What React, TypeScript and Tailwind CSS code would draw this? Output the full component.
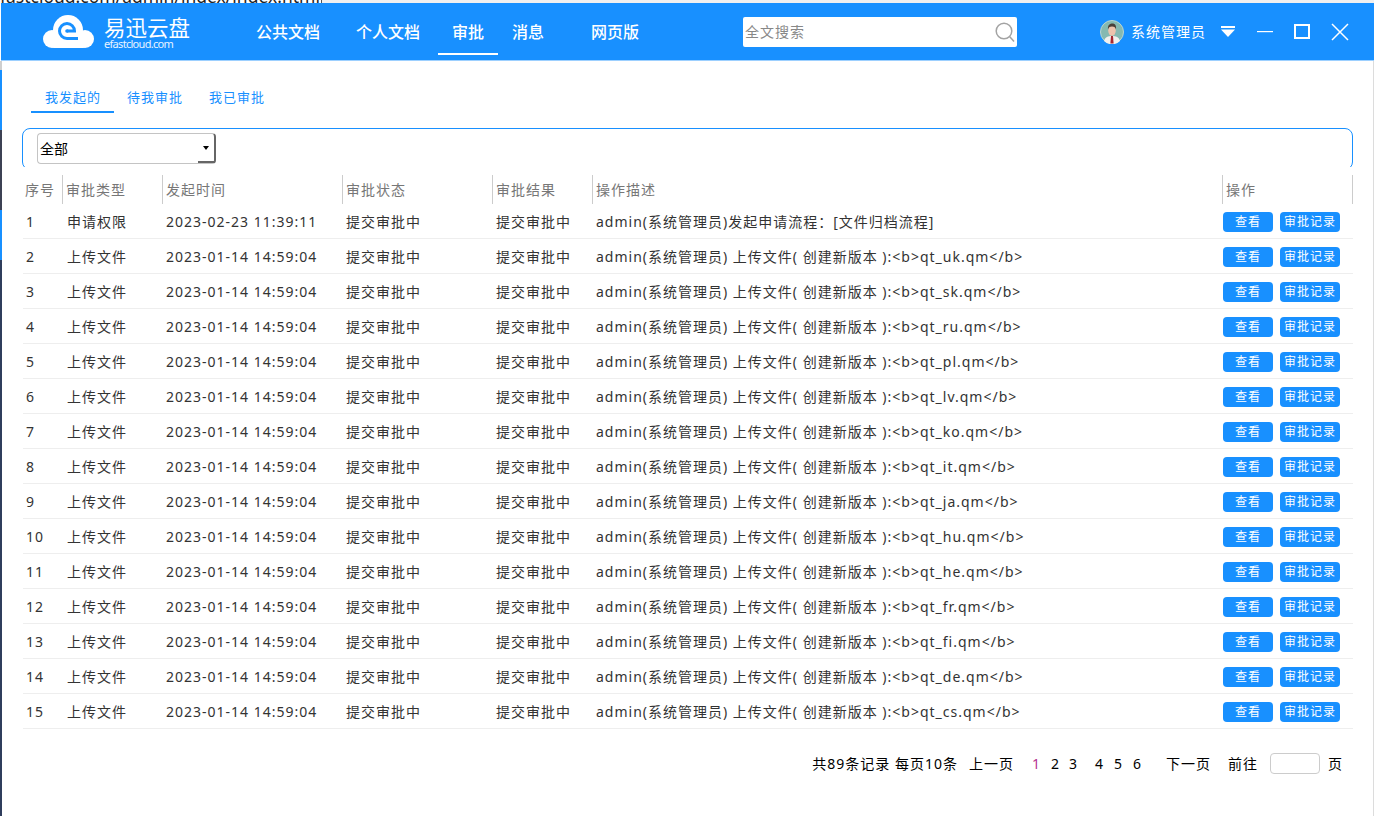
const rows: [string, string, string, string][] = [
  ['1', '申请权限', '2023-02-23 11:39:11', 'admin(系统管理员)发起申请流程：[文件归档流程]'],
  ...['uk', 'sk', 'ru', 'pl', 'lv', 'ko', 'it', 'ja', 'hu', 'he', 'fr', 'fi', 'de', 'cs'].map(
    (code, i): [string, string, string, string] => [
      String(i + 2),
      '上传文件',
      '2023-01-14 14:59:04',
      `admin(系统管理员) 上传文件( 创建新版本 ):<b>qt_${code}.qm</b>`,
    ],
  ),
];

const heads = ['序号', '审批类型', '发起时间', '审批状态', '审批结果', '操作描述', '操作'];
const cols = 'grid grid-cols-[39px_100px_180px_150px_100px_630px_130px]';

function Logo() {
  return (
    <svg width="52" height="34" viewBox="0 0 52 34" className="shrink-0">
      <circle cx="25" cy="15" r="15" fill="#fff" />
      <circle cx="9" cy="24" r="9" fill="#fff" />
      <circle cx="42" cy="24" r="9" fill="#fff" />
      <rect x="9" y="18" width="33" height="15" rx="2" fill="#fff" />
      <path d="M24 16H31.500A7.500 7.500 0 1 0 24 23.500H35" fill="none" stroke="#1890ff" strokeWidth="3" />
      <circle cx="24" cy="16" r="1.800" fill="#1890ff" />
    </svg>
  );
}

function Avatar() {
  return (
    <svg width="24" height="24" viewBox="0 0 24 24" className="shrink-0">
      <circle cx="12" cy="12" r="11.5" fill="#85b9b1" stroke="#b9d5d2" />
      <path d="M4 21c1-4 4-5 8-5s7 1 8 5a11.5 11.5 0 0 1-16 0z" fill="#f1f0ee" />
      <path d="M11 16h2l.6 7.4h-3.2z" fill="#a8262f" />
      <ellipse cx="12" cy="10.5" rx="3.8" ry="5.2" fill="#edc3ad" />
      <path d="M8 9.5C7.5 5 10 3.500 12.500 3.500S16.500 5.500 16 9.500c-.5-2-1.500-3-4-3s-3.500 1-4 3z" fill="#4a3f38" />
    </svg>
  );
}

export default function App() {
  return (
    <div className="flex h-[816px] w-[1374px] flex-col overflow-hidden bg-white font-['Noto_Sans','Noto_Sans_CJK_SC',sans-serif] text-[14px] tracking-[1px] text-[#333]">
      <div className="flex h-[3px] shrink-0 items-end overflow-hidden bg-[#f0f0f0]">
        <div className="w-[322px] shrink-0 whitespace-nowrap border-r border-[#555] bg-white text-[17.5px] leading-[14px] tracking-normal text-[#222]">
          fastcloud.com/admin/index/index.html
        </div>
      </div>

      <header className="ml-px flex h-[58px] shrink-0 items-center border-b border-[#9dd0ff] bg-[#1890ff] text-white">
        <div className="ml-[42px] flex w-[213px] items-center">
          <Logo />
          <div className="ml-[9px] mt-[2px] flex flex-col">
            <span className="text-[21.5px] leading-[22px] tracking-normal">易迅云盘</span>
            <span className="text-[11px] leading-[10px] tracking-[-0.7px] opacity-90">efastcloud.com</span>
          </div>
        </div>
        <nav className="flex h-full items-center text-[16px] font-medium tracking-normal">
          <span className="w-[100px]">公共文档</span>
          <span className="w-[82px]">个人文档</span>
          <span className="flex h-[46px] w-[60px] items-center justify-center border-b-2 border-white pt-[2px]">审批</span>
          <span className="ml-[14px] w-[79px]">消息</span>
          <span>网页版</span>
        </nav>
        <div className="ml-[104px] flex h-[30px] w-[274px] items-center justify-between rounded-[2px] bg-white pl-[2px] pr-[2px] text-[#888]">
          <span>全文搜索</span>
          <svg width="20" height="20" viewBox="0 0 20 20" fill="none" stroke="#a3a3a3" strokeWidth="1.5">
            <circle cx="9" cy="9" r="7.8" />
            <path d="M14.800 14.800 19 19.500" />
          </svg>
        </div>
        <div className="ml-[83px] flex items-center">
          <Avatar />
          <span className="ml-[7px]">系统管理员</span>
          <svg width="14" height="11" viewBox="0 0 14 11" className="ml-[15px]" fill="#fff">
            <rect x="0" y="0" width="14" height="2" />
            <path d="M0 3.500h14L7 11z" />
          </svg>
          <svg width="16" height="2" viewBox="0 0 16 2" className="ml-[22px]" fill="#fff">
            <rect width="16" height="1.200" />
          </svg>
          <div className="ml-[21px] h-[15px] w-[16px] border-2 border-white border-t-[2px]"></div>
          <svg width="18" height="18" viewBox="0 0 18 18" className="ml-[21px]" stroke="#fff" strokeWidth="1.500">
            <path d="M1 1l16 16M17 1 1 17" />
          </svg>
        </div>
      </header>

      <div className="flex min-h-0 flex-1">
        <div className="flex w-[2px] shrink-0 flex-col">
          <div className="h-[9px] bg-[#cfcfcf]"></div>
          <div className="h-[60px] bg-[#1890ff]"></div>
          <div className="h-[80px] bg-[#3c4154]"></div>
          <div className="h-[50px] bg-[#1890ff]"></div>
          <div className="flex-1 bg-[#2f3d5c]"></div>
        </div>

        <main className="flex min-w-0 flex-1 flex-col border-r border-[#dcdcdc] pl-[21px]">
          <div className="mt-[24px] flex h-[28px] shrink-0 text-[13px] leading-[24px] text-[#1890ff]">
            <span className="ml-[8px] w-[83px] border-b-2 border-[#1890ff] pl-[14px]">我发起的</span>
            <span className="ml-[13px] w-[82px]">待我审批</span>
            <span>我已审批</span>
          </div>

          <div className="mt-[15px] -ml-px h-[39px] w-[1331px] shrink-0 overflow-hidden">
            <div className="h-[42px] rounded-[8px] border border-[#1890ff] pl-[14px] pt-[4px]">
              <div className="flex h-[31px] w-[179px] items-center justify-between rounded-[4px] border border-[#c4c4c4] border-r-2 border-r-[#666] pl-[2px] tracking-normal text-black">
                <span>全部</span>
                <span className="flex h-full w-[16px] items-center justify-center border-b-2 border-[#666]">
                  <span className="mt-[1px] h-0 w-0 border-x-[3px] border-t-[4px] border-x-transparent border-t-black"></span>
                </span>
              </div>
            </div>
          </div>

          <div className={`${cols} mt-[8px] h-[29px] w-[1330px] shrink-0 border-r border-[#ccc] text-[#777]`}>
            {heads.map((h, i) => (
              <div key={h} className={i === 0 ? 'flex items-center pl-[2px]' : 'flex items-center border-l border-[#ccc] pl-[3px]'}>
                {h}
              </div>
            ))}
          </div>

          {rows.map((r) => (
            <div key={r[0]} className={`${cols} h-[35px] w-[1330px] shrink-0 items-center border-b border-[#eee]`}>
              <div className="pl-[3px]">{r[0]}</div>
              <div className="pl-[5px]">{r[1]}</div>
              <div className="whitespace-nowrap pl-[4px]">{r[2]}</div>
              <div className="pl-[4px]">提交审批中</div>
              <div className="pl-[4px]">提交审批中</div>
              <div className="whitespace-nowrap pl-[4px]">{r[3]}</div>
              <div className="mt-[1px] flex gap-[7px] pl-[1px] text-[12px] text-white">
                <span className="flex h-[20px] w-[50px] items-center justify-center rounded-[4px] bg-[#1890ff]">查看</span>
                <span className="flex h-[20px] w-[60px] items-center justify-center rounded-[4px] bg-[#1890ff]">审批记录</span>
              </div>
            </div>
          ))}

          <div className="mt-[23px] flex h-[22px] w-[1320px] shrink-0 items-center justify-end text-black">
            <span>共89条记录 每页10条</span>
            <span className="ml-[11px]">上一页</span>
            <span className="ml-[18px] text-[#b5318f]">1</span>
            <span className="ml-[10px]">2</span>
            <span className="ml-[9px]">3</span>
            <span className="ml-[17px]">4</span>
            <span className="ml-[10px]">5</span>
            <span className="ml-[10px]">6</span>
            <span className="ml-[24px]">下一页</span>
            <span className="ml-[17px]">前往</span>
            <span className="ml-[12px] h-[21px] w-[50px] rounded-[4px] border border-[#ccc]"></span>
            <span className="ml-[8px]">页</span>
          </div>
        </main>
      </div>
    </div>
  );
}
